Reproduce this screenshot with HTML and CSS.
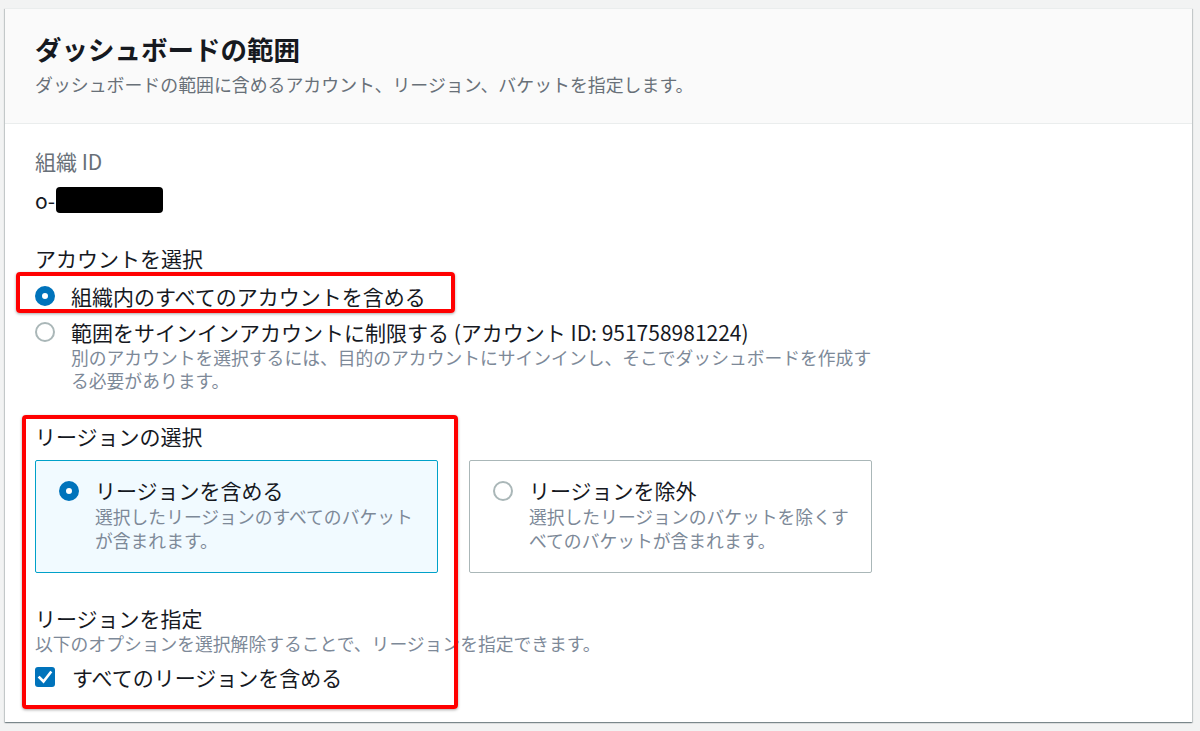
FILE: index.html
```html
<!DOCTYPE html>
<html lang="ja">
<head>
<meta charset="utf-8">
<title>ダッシュボードの範囲</title>
<link rel="stylesheet" href="styles.css">
</head>
<body>
<div class="page">
  <section class="card">
    <header class="card-header">
      <h2 class="card-title">ダッシュボードの範囲</h2>
      <p class="card-subtitle">ダッシュボードの範囲に含めるアカウント、リージョン、バケットを指定します。</p>
    </header>
    <div class="card-body">
      <div class="form">
        <div class="field">
          <div class="kv-label">組織 ID</div>
          <div class="kv-value">o-<span class="redact"></span></div>
        </div>

        <div class="field section">
          <div class="field-label">アカウントを選択</div>
          <div class="radio-group">
            <div class="radio-row">
              <span class="radio checked"></span>
              <span class="radio-text">組織内のすべてのアカウントを含める</span>
            </div>
            <div class="radio-row top">
              <span class="radio"></span>
              <div class="radio-body">
                <div class="radio-text">範囲をサインインアカウントに制限する (アカウント ID: 951758981224)</div>
                <div class="desc">別のアカウントを選択するには、目的のアカウントにサインインし、そこでダッシュボードを作成する必要があります。</div>
              </div>
            </div>
          </div>
        </div>

        <div class="field section">
          <div class="field-label">リージョンの選択</div>
          <div class="tiles">
            <div class="tile selected">
              <span class="radio checked"></span>
              <div class="radio-body">
                <div class="radio-text">リージョンを含める</div>
                <div class="desc">選択したリージョンのすべてのバケットが含まれます。</div>
              </div>
            </div>
            <div class="tile">
              <span class="radio"></span>
              <div class="radio-body">
                <div class="radio-text">リージョンを除外</div>
                <div class="desc">選択したリージョンのバケットを除くすべてのバケットが含まれます。</div>
              </div>
            </div>
          </div>
        </div>

        <div class="field section-lg">
          <div class="field-label">リージョンを指定</div>
          <div class="desc">以下のオプションを選択解除することで、リージョンを指定できます。</div>
          <div class="check-row">
            <span class="checkbox"><svg viewBox="0 0 20 20" width="20" height="20"><polyline points="4.5,10.5 8.5,14.5 15.5,5.5" fill="none" stroke="#ffffff" stroke-width="2.6" stroke-linecap="square"/></svg></span>
            <span class="radio-text">すべてのリージョンを含める</span>
          </div>
        </div>
      </div>
    </div>
  </section>
</div>
<div class="highlight hl-account"></div>
<div class="highlight hl-region"></div>
</body>
</html>
```

FILE: styles.css
```css
html, body {
  margin: 0;
  padding: 0;
}
body {
  background: #f2f3f3;
  font-family: "Noto Sans CJK JP", "Noto Sans", sans-serif;
  color: #16191f;
  position: relative;
  min-height: 731px;
}
.page {
  padding: 8px 8px 9px 5px;
}
.card {
  background: #ffffff;
  border-top: 1px solid #eaeded;
  box-shadow: 0 1px 1px 0 rgba(0, 28, 36, 0.3), 1px 1px 1px 0 rgba(0, 28, 36, 0.15), -1px 1px 1px 0 rgba(0, 28, 36, 0.15);
}
.card-header {
  background: #fafafa;
  padding: 24px 30px 27px 30px;
  border-bottom: 1px solid #eaeded;
}
.card-title {
  margin: 0;
  font-size: 26.5px;
  line-height: 32px;
  font-weight: 700;
  color: #16191f;
}
.card-subtitle {
  margin: 7px 0 0 0;
  font-size: 17.9px;
  line-height: 24px;
  color: #687078;
}
.card-body {
  padding: 23px 30px 31px 30px;
}
.form {
  width: 850px;
}
.kv-label {
  font-size: 21px;
  line-height: 28px;
  color: #687078;
}
.kv-value {
  margin-top: 11px;
  font-size: 21px;
  line-height: 28px;
  display: flex;
  align-items: center;
}
.redact {
  display: inline-block;
  width: 107px;
  height: 26px;
  background: #000000;
  border-radius: 4px;
  margin-left: 1px;
}
.section {
  margin-top: 30px;
}
.section-lg {
  margin-top: 31px;
}
.field-label {
  font-size: 21px;
  line-height: 28px;
  color: #16191f;
}
.radio-group {
  margin-top: 10px;
  display: flex;
  flex-direction: column;
  gap: 8px;
}
.radio-row {
  display: flex;
  align-items: center;
  gap: 16px;
}
.radio-row.top {
  align-items: flex-start;
}
.radio-row.top .radio {
  margin-top: 4px;
}
.radio {
  box-sizing: border-box;
  flex: 0 0 20px;
  width: 20px;
  height: 20px;
  border-radius: 50%;
  border: 2px solid #aab7b8;
  background: #ffffff;
}
.radio.checked {
  border: 7px solid #0073bb;
}
.radio-text {
  font-size: 21px;
  line-height: 28px;
  color: #16191f;
}
.radio-body {
  flex: 1;
  min-width: 0;
}
.desc {
  font-size: 17.8px;
  line-height: 23px;
  color: #7d8998;
}
.tiles {
  margin-top: 10px;
  display: grid;
  grid-template-columns: 403px 403px;
  gap: 31px;
}
.tile {
  box-sizing: border-box;
  height: 113px;
  display: flex;
  align-items: flex-start;
  gap: 16px;
  padding: 15px 18px 20px 23px;
  border: 1px solid #aab7b8;
  border-radius: 2px;
  background: #ffffff;
}
.tile .radio {
  margin-top: 5px;
}
.tile .desc {
  line-height: 24px;
}
.tile.selected {
  background: #f1faff;
  border-color: #00a1c9;
}
.check-row {
  margin-top: 8px;
  display: flex;
  align-items: center;
  gap: 17px;
}
.checkbox {
  flex: 0 0 20px;
  width: 20px;
  height: 20px;
  border-radius: 3px;
  background: #0073bb;
  display: block;
}
.checkbox svg {
  display: block;
}
.highlight {
  position: absolute;
  box-sizing: border-box;
  border: 4px solid #ff0000;
  border-radius: 4px;
  box-shadow: 0 1px 3px rgba(0, 0, 0, 0.35);
  pointer-events: none;
}
.hl-account {
  left: 16px;
  top: 272px;
  width: 439px;
  height: 41px;
}
.hl-region {
  left: 22px;
  top: 415px;
  width: 436px;
  height: 294px;
}
```
